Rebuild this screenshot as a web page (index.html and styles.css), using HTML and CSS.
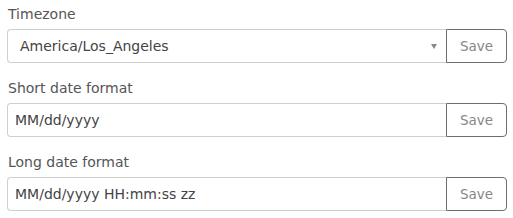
FILE: index.html
```html
<!DOCTYPE html>
<html>
<head>
<meta charset="utf-8">
<link rel="stylesheet" href="styles.css">
</head>
<body>
<div class="form">
  <div class="group">
    <div class="label">Timezone</div>
    <div class="row">
      <div class="field select">
        <span class="value">America/Los_Angeles</span>
        <span class="caret"></span>
      </div>
      <button class="save">Save</button>
    </div>
  </div>
  <div class="group">
    <div class="label">Short date format</div>
    <div class="row">
      <div class="field input"><span class="value">MM/dd/yyyy</span></div>
      <button class="save">Save</button>
    </div>
  </div>
  <div class="group">
    <div class="label">Long date format</div>
    <div class="row">
      <div class="field input"><span class="value">MM/dd/yyyy HH:mm:ss zz</span></div>
      <button class="save">Save</button>
    </div>
  </div>
</div>
</body>
</html>
```
FILE: styles.css
```css
html, body {
  margin: 0;
  padding: 0;
  background: #ffffff;
}
body {
  font-family: "DejaVu Sans", "Open Sans", sans-serif;
  color: #444;
}
.form {
  padding: 4px 6px 0 7px;
  display: flex;
  flex-direction: column;
  gap: 15px;
}
.label {
  font-size: 14px;
  line-height: 20px;
  color: #555;
  padding-left: 1px;
  margin-bottom: 5px;
}
.row {
  display: flex;
  height: 34px;
}
.field {
  flex: 1;
  box-sizing: border-box;
  border: 1px solid #cfcfcf;
  border-right: none;
  border-radius: 4px 0 0 4px;
  display: flex;
  align-items: center;
  font-size: 14px;
  color: #444;
}
.select {
  padding-left: 12px;
  padding-right: 9px;
}
.input {
  padding-left: 7px;
}
.value {
  flex: 1;
}
.caret {
  width: 0;
  height: 0;
  border-left: 3px solid transparent;
  border-right: 3px solid transparent;
  border-top: 5px solid #888;
}
.save {
  box-sizing: border-box;
  width: 61px;
  height: 34px;
  border: 1px solid #6e6e6e;
  border-radius: 0 4px 4px 0;
  background: #fff;
  font-family: inherit;
  font-size: 13.5px;
  color: #888;
  padding: 0;
  margin: 0;
}
```
